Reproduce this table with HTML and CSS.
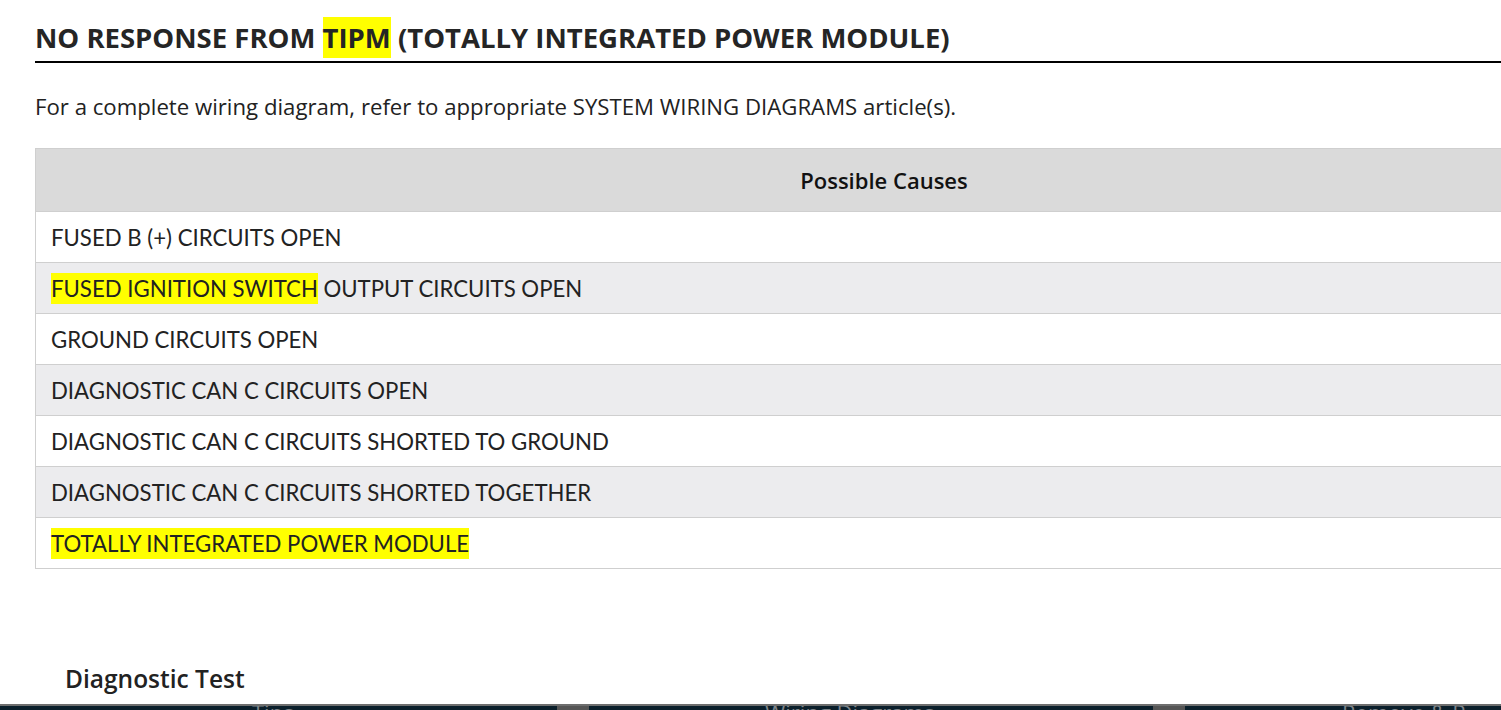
FILE: index.html
```html
<!DOCTYPE html>
<html lang="en">
<head>
<meta charset="utf-8">
<title>No Response from TIPM</title>
<link rel="stylesheet" href="styles.css">
</head>
<body>
<main class="page">
  <h1 class="title">NO RESPONSE FROM <mark class="hl hl-title">TIPM</mark> (TOTALLY INTEGRATED POWER MODULE)</h1>
  <p class="intro">For a complete wiring diagram, refer to appropriate SYSTEM WIRING DIAGRAMS article(s).</p>
  <table class="causes">
    <thead>
      <tr><th>Possible Causes</th></tr>
    </thead>
    <tbody>
      <tr><td>FUSED B (+) CIRCUITS OPEN</td></tr>
      <tr><td><mark class="hl">FUSED IGNITION SWITCH</mark> OUTPUT CIRCUITS OPEN</td></tr>
      <tr><td>GROUND CIRCUITS OPEN</td></tr>
      <tr><td>DIAGNOSTIC CAN C CIRCUITS OPEN</td></tr>
      <tr><td>DIAGNOSTIC CAN C CIRCUITS SHORTED TO GROUND</td></tr>
      <tr><td>DIAGNOSTIC CAN C CIRCUITS SHORTED TOGETHER</td></tr>
      <tr><td><mark class="hl">TOTALLY INTEGRATED POWER MODULE</mark></td></tr>
    </tbody>
  </table>
  <h2 class="section">Diagnostic Test</h2>
</main>
<nav class="taskbar">
  <span class="tb-text tb-tips">Tips</span>
  <span class="tb-chip tb-chip1"></span>
  <span class="tb-text tb-wiring">Wiring Diagrams</span>
  <span class="tb-chip tb-chip2"></span>
  <span class="tb-text tb-remove">Remove &amp; R</span>
</nav>
</body>
</html>
```
FILE: styles.css
```css
html, body {
  margin: 0;
  padding: 0;
  background: #ffffff;
  overflow: hidden;
}
body {
  width: 1501px;
  height: 710px;
  color: #262626;
  font-family: "Open Sans", "Liberation Sans", sans-serif;
}
.page {
  padding: 16px 0 0 35px;
  width: 1700px;
}
.title {
  margin: 0;
  font-size: 27.5px;
  font-weight: 700;
  line-height: 44px;
  color: #252525;
  border-bottom: 2px solid #000;
  padding-bottom: 1px;
  letter-spacing: 0;
}
.hl {
  background: #ffff00;
  color: inherit;
  padding: 2px 0;
}
.hl-title {
  padding: 2px 0;
}
.intro {
  margin: 29px 0 0 0;
  font-size: 22.2px;
  line-height: 30px;
  color: #222;
}
.causes {
  margin-top: 26px;
  width: 1698px;
  border-collapse: collapse;
  border: 1px solid #cfcfcf;
  font-family: "Lato", "Liberation Sans", sans-serif;
}
.causes th {
  background: #dadada;
  height: 62px;
  padding: 0;
  font-family: "Open Sans", sans-serif;
  font-size: 22px;
  font-weight: 600;
  color: #111;
  border-bottom: 1px solid #cfcfcf;
  text-align: center;
}
.causes td {
  height: 50px;
  padding: 0 0 0 15px;
  font-size: 22.2px;
  color: #222;
  border-bottom: 1px solid #cfcfcf;
  text-align: left;
}
.causes tbody tr:nth-child(even) td {
  background: #ececee;
}
.section {
  margin: 94px 0 0 30px;
  font-size: 24.5px;
  font-weight: 600;
  line-height: 32px;
  color: #222;
}
.taskbar {
  position: fixed;
  left: 0;
  bottom: 0;
  width: 100%;
  height: 4px;
  background: #0b1f2b;
  border-top: 2px solid #6e6e6e;
  overflow: hidden;
}
.tb-text {
  position: absolute;
  top: -5px;
  font-family: "Open Sans", sans-serif;
  font-size: 22px;
  line-height: 22px;
  color: #7d8388;
}
.tb-tips { left: 252px; }
.tb-wiring { left: 765px; }
.tb-remove { left: 1342px; }
.tb-chip {
  position: absolute;
  top: 0;
  height: 4px;
  width: 32px;
  background: #555;
}
.tb-chip1 { left: 557px; }
.tb-chip2 { left: 1153px; }
```
